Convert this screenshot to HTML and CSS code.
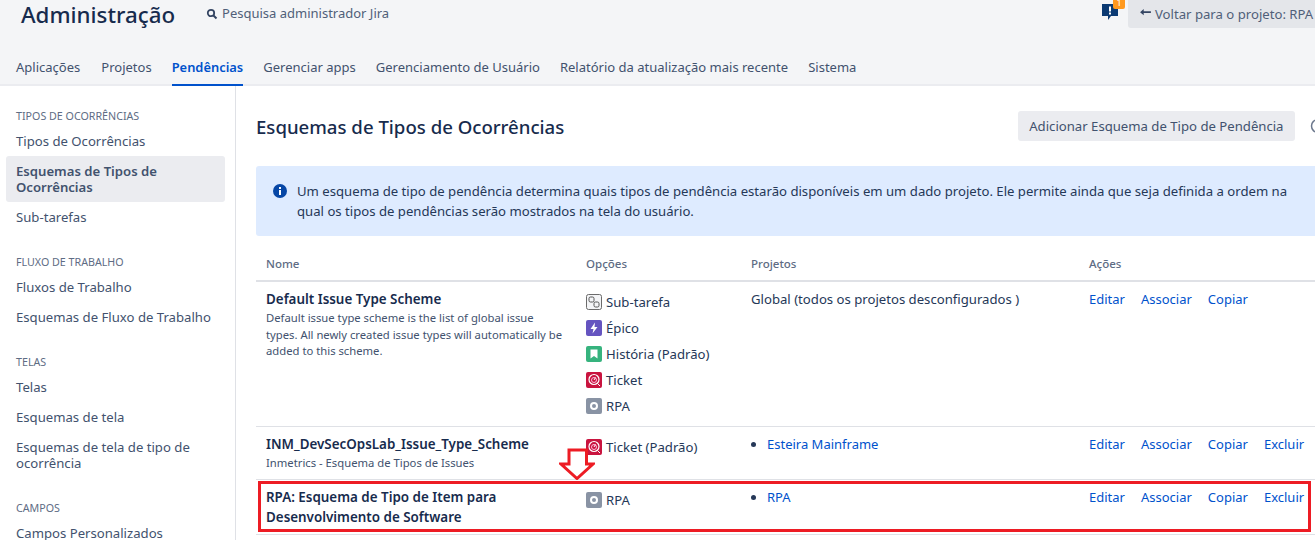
FILE: index.html
```html
<!DOCTYPE html>
<html lang="pt-BR">
<head>
  <meta charset="UTF-8" />
  <title>Esquemas de Tipos de Ocorrências</title>
  <link rel="stylesheet" href="styles.css">
</head>
<body>
  <header class="admin-header">
    <div class="header-top">
      <h1>Administração</h1>
      <div class="admin-search">
        <svg class="search-icon" viewBox="0 0 12 12" width="12" height="12"><circle cx="5" cy="5" r="3.2" fill="none" stroke="#344563" stroke-width="1.8"/><path d="M7.5 7.5L10.5 10.5" stroke="#344563" stroke-width="2"/></svg>
        <span>Pesquisa administrador Jira</span>
      </div>
      <div class="header-right">
        <div class="feedback">
          <svg viewBox="0 0 17 20" width="17" height="20"><path d="M0 3h16v12H9l-3 4v-4H0z" fill="#0b3a73"/><rect x="7" y="5.500" width="2" height="5" fill="#fff"/><rect x="7" y="11.500" width="2" height="2" fill="#fff"/></svg>
          <span class="feedback-badge">1</span>
        </div>
        <div class="back-button">
          <svg viewBox="0 0 12 10" width="11" height="9"><path d="M0 3.500L4 0v2.500h8v2H4V7z" fill="#344563"/></svg>
          <span>Voltar para o projeto: RPA</span>
        </div>
      </div>
    </div>
    <nav class="admin-tabs">
      <a>Aplicações</a>
      <a>Projetos</a>
      <a class="active">Pendências</a>
      <a>Gerenciar apps</a>
      <a>Gerenciamento de Usuário</a>
      <a>Relatório da atualização mais recente</a>
      <a>Sistema</a>
    </nav>
  </header>

  <div class="layout">
    <aside class="sidebar">
      <h4>Tipos de Ocorrências</h4>
      <a>Tipos de Ocorrências</a>
      <a class="selected">Esquemas de Tipos de Ocorrências</a>
      <a>Sub-tarefas</a>
      <h4>Fluxo de Trabalho</h4>
      <a>Fluxos de Trabalho</a>
      <a>Esquemas de Fluxo de Trabalho</a>
      <h4>Telas</h4>
      <a>Telas</a>
      <a>Esquemas de tela</a>
      <a>Esquemas de tela de tipo de ocorrência</a>
      <h4>Campos</h4>
      <a>Campos Personalizados</a>
    </aside>

    <main class="content">
      <div class="page-head">
        <h2>Esquemas de Tipos de Ocorrências</h2>
        <button>Adicionar Esquema de Tipo de Pendência</button>
        <svg class="help-icon" viewBox="0 0 16 16" width="16" height="16"><circle cx="8" cy="8" r="6.500" fill="none" stroke="#6b778c" stroke-width="1.500"/></svg>
      </div>

      <div class="info-box">
        <svg class="info-icon" viewBox="0 0 16 16" width="16" height="16"><circle cx="8" cy="8" r="7" fill="#0747a6"/><rect x="7" y="7" width="2" height="5" fill="#fff"/><rect x="7" y="4" width="2" height="2" fill="#fff"/></svg>
        <p>Um esquema de tipo de pendência determina quais tipos de pendência estarão disponíveis em um dado projeto. Ele permite ainda que seja definida a ordem na qual os tipos de pendências serão mostrados na tela do usuário.</p>
      </div>

      <table class="schemes">
        <thead>
          <tr><th class="col-name">Nome</th><th class="col-options">Opções</th><th class="col-projects">Projetos</th><th>Ações</th></tr>
        </thead>
        <tbody>
          <tr>
            <td>
              <strong>Default Issue Type Scheme</strong>
              <div class="desc">Default issue type scheme is the list of global issue types. All newly created issue types will automatically be added to this scheme.</div>
            </td>
            <td>
              <div class="issue-type">
                <svg viewBox="0 0 16 16" width="16" height="16"><rect x="0.500" y="0.500" width="15" height="15" rx="2" fill="#f4f5f7" stroke="#6b6b6b"/><rect x="3" y="3" width="5" height="5" rx="1.500" fill="none" stroke="#555"/><rect x="8" y="8" width="5" height="5" rx="1.500" fill="none" stroke="#555"/></svg>
                <span>Sub-tarefa</span>
              </div>
              <div class="issue-type">
                <svg viewBox="0 0 16 16" width="16" height="16"><rect width="16" height="16" rx="2" fill="#6554c0"/><path d="M9 2.500L4.500 9H7.500L6.500 13.500L11.500 7H8.500z" fill="#fff"/></svg>
                <span>Épico</span>
              </div>
              <div class="issue-type">
                <svg viewBox="0 0 16 16" width="16" height="16"><rect width="16" height="16" rx="2" fill="#36b37e"/><path d="M4.500 3.500h7v9L8 10l-3.500 2.500z" fill="#fff"/></svg>
                <span>História (Padrão)</span>
              </div>
              <div class="issue-type">
                <svg viewBox="0 0 16 16" width="16" height="16"><rect width="16" height="16" rx="2" fill="#c9143f"/><circle cx="8" cy="7.500" r="5" fill="none" stroke="#fff" stroke-width="1.200"/><circle cx="8" cy="8" r="2.500" fill="none" stroke="#fbd" stroke-width="1"/><path d="M8 8L9.500 5.500M11.500 11.500L14 14" stroke="#fff"/></svg>
                <span>Ticket</span>
              </div>
              <div class="issue-type">
                <svg viewBox="0 0 16 16" width="16" height="16"><rect width="16" height="16" rx="2" fill="#8993a4"/><circle cx="8" cy="8" r="3" fill="none" stroke="#fff" stroke-width="2"/></svg>
                <span>RPA</span>
              </div>
            </td>
            <td>Global (todos os projetos desconfigurados )</td>
            <td class="actions"><a>Editar</a><a>Associar</a><a>Copiar</a></td>
          </tr>
          <tr>
            <td>
              <strong>INM_DevSecOpsLab_Issue_Type_Scheme</strong>
              <div class="desc">Inmetrics - Esquema de Tipos de Issues</div>
            </td>
            <td>
              <div class="issue-type">
                <svg viewBox="0 0 16 16" width="16" height="16"><rect width="16" height="16" rx="2" fill="#c9143f"/><circle cx="8" cy="7.500" r="5" fill="none" stroke="#fff" stroke-width="1.200"/><circle cx="8" cy="8" r="2.500" fill="none" stroke="#fbd" stroke-width="1"/><path d="M8 8L9.500 5.500M11.500 11.500L14 14" stroke="#fff"/></svg>
                <span>Ticket (Padrão)</span>
              </div>
            </td>
            <td><ul><li><a>Esteira Mainframe</a></li></ul></td>
            <td class="actions"><a>Editar</a><a>Associar</a><a>Copiar</a><a>Excluir</a></td>
          </tr>
          <tr>
            <td><strong>RPA: Esquema de Tipo de Item para Desenvolvimento de Software</strong></td>
            <td>
              <div class="issue-type">
                <svg viewBox="0 0 16 16" width="16" height="16"><rect width="16" height="16" rx="2" fill="#8993a4"/><circle cx="8" cy="8" r="3" fill="none" stroke="#fff" stroke-width="2"/></svg>
                <span>RPA</span>
              </div>
            </td>
            <td><ul><li><a>RPA</a></li></ul></td>
            <td class="actions"><a>Editar</a><a>Associar</a><a>Copiar</a><a>Excluir</a></td>
          </tr>
        </tbody>
      </table>
    </main>
  </div>

  <!-- marcacao vermelha por cima do print -->
  <svg class="mark-arrow" viewBox="0 0 36 32" width="36" height="32"><path d="M10 2H27.500V16H34L18 30.500L2 16H10z" fill="#fff" stroke="#ed1c24" stroke-width="3"/></svg>
  <div class="mark-box"></div>
</body>
</html>
```

FILE: styles.css
```css
html, body {
  height: 540px;
  overflow: hidden;
}

body {
  margin: 0;
  width: 1315px;
  position: relative;
  font-family: "Noto Sans", "Open Sans", sans-serif;
  font-size: 13.15px;
  color: #172b4d;
  background: #fff;
}

/* header */
.admin-header {
  background: #f4f5f7;
  border-bottom: 2px solid #ebecf0;
  height: 84px;
  padding-left: 16px;
}

.header-top {
  display: flex;
  height: 48px;
}

.header-top h1 {
  margin: 0 0 0 5px;
  font-size: 22.3px;
  font-weight: 500;
  line-height: 29px;
  color: #172b4d;
}

.admin-search {
  margin-left: 31px;
  display: flex;
  align-items: flex-start;
  gap: 4px;
  line-height: 27px;
  color: #505f79;
  font-size: 13px;
}

.search-icon {
  margin-top: 8px;
}

.header-right {
  margin-left: auto;
  display: flex;
  align-items: flex-start;
}

.feedback {
  position: relative;
  margin-right: 9px;
  padding-top: 1px;
}

.feedback-badge {
  position: absolute;
  top: -3px;
  left: 11px;
  width: 12px;
  height: 12px;
  background: #ff991f;
  border-radius: 2px;
  color: #fff;
  font-size: 9px;
  line-height: 12px;
  text-align: center;
}

.back-button {
  display: flex;
  align-items: center;
  gap: 4px;
  height: 28px;
  width: 187px;
  box-sizing: border-box;
  padding: 0 0 1px 12px;
  background: #e4e6ea;
  border-radius: 0 0 0 3px;
  color: #505f79;
  white-space: nowrap;
}

.admin-tabs {
  display: flex;
  gap: 20px;
  height: 36px;
  font-size: 13.02px;
}

.admin-tabs a {
  line-height: 38px;
  color: #42526e;
  white-space: nowrap;
}

.admin-tabs a:first-child {
  margin-right: 1px;
}

.admin-tabs a.active {
  color: #0052cc;
  font-weight: 600;
  font-size: 12.9px;
  border-bottom: 2px solid #0052cc;
  height: 38px;
  box-sizing: border-box;
}

/* sidebar */
.layout {
  display: flex;
}

.sidebar {
  width: 236px;
  height: 454px;
  flex-shrink: 0;
  box-sizing: border-box;
  border-right: 1px solid #dfe1e6;
  padding: 22px 10px 0 6px;
}

.sidebar h4 {
  margin: 0 0 2px;
  padding-left: 10px;
  font-size: 10.7px;
  font-weight: 400;
  line-height: 16px;
  text-transform: uppercase;
  color: #5e6c84;
}

.sidebar h4 ~ h4 {
  margin-top: 22px;
}

.sidebar a {
  display: block;
  padding: 7px 10px;
  line-height: 16px;
  color: #42526e;
}

.sidebar a.selected {
  background: #ebecf0;
  border-radius: 3px;
  font-weight: 600;
}

/* content */
.content {
  padding-left: 20px;
  width: 1070px;
  flex-shrink: 0;
}

.page-head {
  display: flex;
  align-items: center;
  height: 80px;
  padding-bottom: 1px;
  box-sizing: border-box;
}

.page-head h2 {
  margin: 0;
  padding-top: 1px;
  font-size: 18.6px;
  font-weight: 500;
  color: #172b4d;
  flex: 1;
}

.page-head button {
  height: 30px;
  padding: 0 11.5px;
  border: none;
  border-radius: 3px;
  background: #ebecf0;
  color: #42526e;
  font: inherit;
}

.help-icon {
  margin-left: 15px;
  flex-shrink: 0;
}

.info-box {
  display: flex;
  gap: 9px;
  height: 70px;
  box-sizing: border-box;
  padding: 15px 26px 0 16px;
  background: #deebff;
  border-radius: 3px;
}

.info-icon {
  flex-shrink: 0;
  margin-top: 2px;
}

.info-box p {
  margin: 0;
  line-height: 20px;
  color: #253858;
}

.schemes {
  width: 1060px;
  border-collapse: collapse;
  table-layout: fixed;
  margin-top: 9px;
}

.schemes th {
  text-align: left;
  font-size: 11.5px;
  font-weight: 500;
  color: #5e6c84;
  height: 34px;
  padding: 1px 10px 0;
  border-bottom: 2px solid #dfe1e6;
}

.col-name {
  width: 300px;
}

.col-options {
  width: 145px;
}

.col-projects {
  width: 318px;
}

.schemes td {
  vertical-align: top;
  padding: 7px 10px;
  border-bottom: 1px solid #dfe1e6;
  color: #253858;
  line-height: 20px;
}

.schemes strong {
  font-size: 13.4px;
  font-weight: 600;
  color: #172b4d;
}

.desc {
  margin-top: 1px;
  font-size: 11.27px;
  line-height: 16.5px;
  color: #42526e;
}

.issue-type {
  display: flex;
  align-items: center;
  gap: 4px;
  height: 26px;
  white-space: nowrap;
}

.schemes ul {
  margin: 0;
  padding-left: 16px;
  font-size: 13px;
}

.schemes a {
  color: #0052cc;
}

.actions {
  font-size: 13px;
}

.actions a {
  margin-right: 16px;
}

/* annotation over the screenshot */
.mark-box {
  position: absolute;
  left: 258px;
  top: 481px;
  width: 1047px;
  height: 45px;
  border: 3px solid #ed1c24;
}

.mark-arrow {
  position: absolute;
  left: 559px;
  top: 448px;
}
```
